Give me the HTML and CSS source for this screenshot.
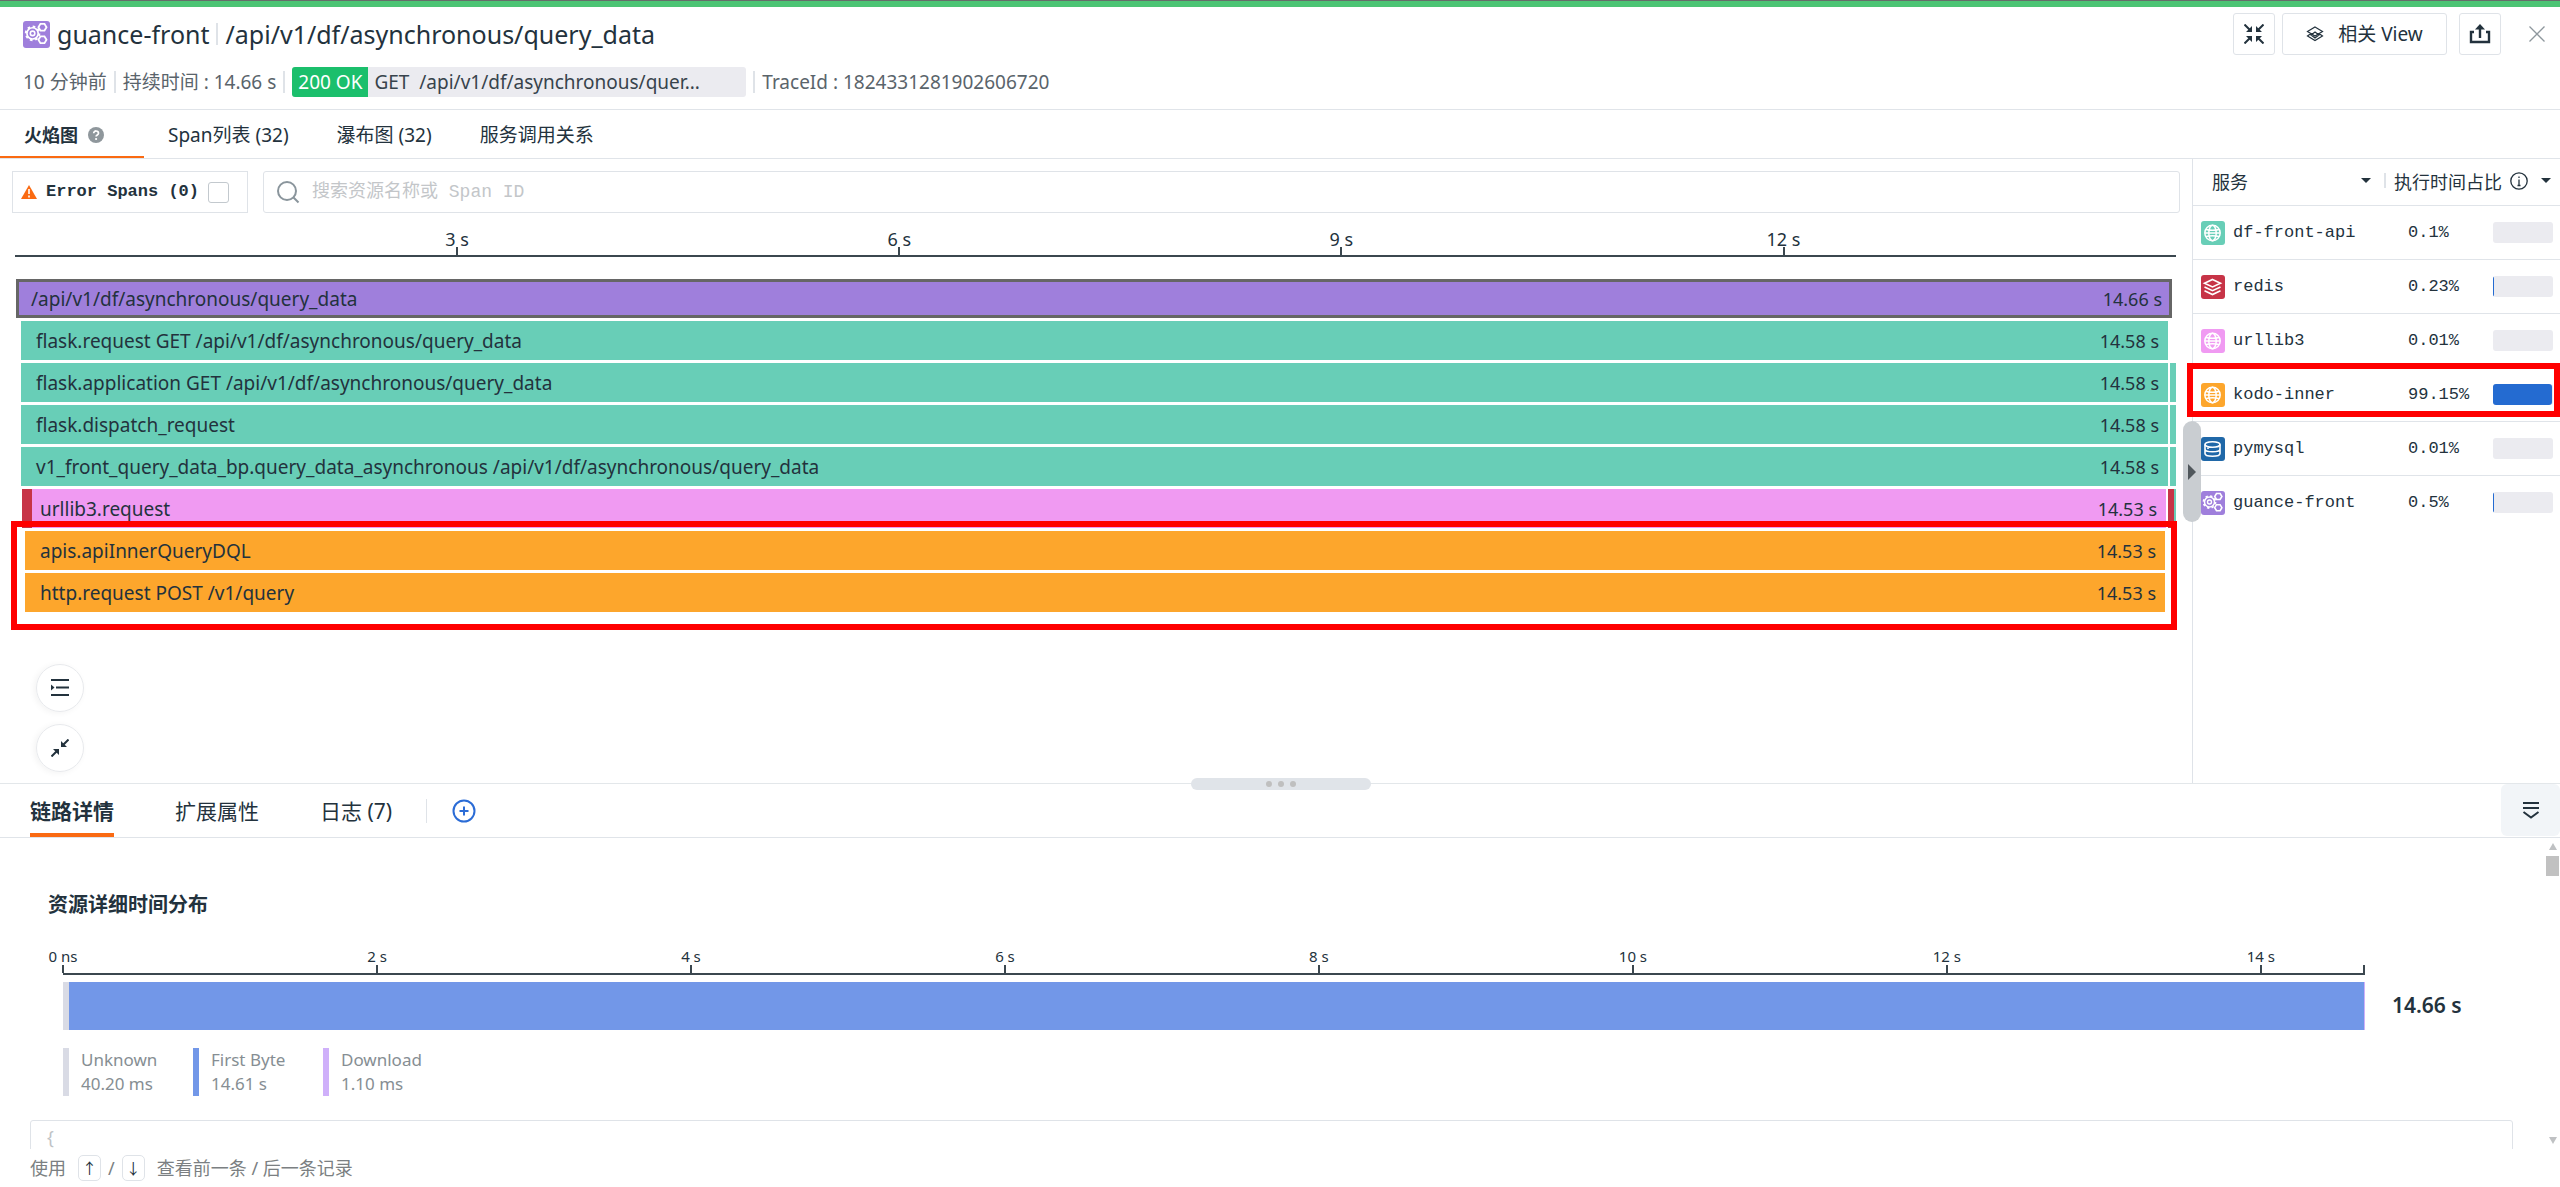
FILE: index.html
```html
<!DOCTYPE html>
<html lang="zh-CN">
<head>
<meta charset="utf-8">
<title>guance-front</title>
<link rel="stylesheet" href="styles.css">
</head>
<body>
<svg class="sprite" aria-hidden="true">
  <symbol id="i-gears" viewBox="0 0 24 24" fill="none" stroke="#fff">
    <circle cx="8.500" cy="11" r="5" stroke-width="1.500"/>
    <circle cx="8.500" cy="11" r="2" stroke-width="1.400"/>
    <circle cx="8.500" cy="11" r="6" stroke-width="1.800" stroke-dasharray="2.300 2.400"/>
    <path d="M15.500 2.500h3.600l1.800 3-1.800 3h-3.600l-1.800-3zM15.500 13.700h3.600l1.800 3-1.800 3h-3.600l-1.800-3z" stroke-width="1.600"/>
  </symbol>
  <symbol id="i-globe" viewBox="0 0 24 24" fill="none" stroke="#fff" stroke-width="1.500">
    <circle cx="11.500" cy="12" r="7.700"/>
    <ellipse cx="11.500" cy="12" rx="3.700" ry="7.700"/>
    <path d="M4 12h15M5 8.500c4 1 9 1 13 0M5 15.500c4-1 9-1 13 0"/>
  </symbol>
  <symbol id="i-layers" viewBox="0 0 24 24" fill="none" stroke="#fff" stroke-width="1.600">
    <path d="M11.500 4.500l8 3.700-8 3.700-8-3.700zM3.500 12l8 3.700 8-3.700M3.500 15.700l8 3.800 8-3.800"/>
  </symbol>
  <symbol id="i-db" viewBox="0 0 24 24" fill="none" stroke="#fff" stroke-width="1.600">
    <ellipse cx="11.500" cy="7.500" rx="7.500" ry="2.800"/>
    <path d="M4 7.500v9c0 3.700 15 3.700 15 0v-9M4 12c0 2.500 3 2.800 7.500 2.800s7.500-.3 7.500-2.800M7 10.500v1.500"/>
  </symbol>
</svg>

<header class="header">
  <div class="header-main">
    <h1 class="title">
      <svg class="title-icon tile-purple"><use href="#i-gears"/></svg>
      <span>guance-front</span><i class="sep"></i><span>/api/v1/df/asynchronous/query_data</span>
    </h1>
    <div class="meta">
      <span>10 分钟前</span><i class="sep"></i>
      <span>持续时间 : 14.66 s</span><i class="sep"></i>
      <span class="status"><b class="status-code">200 OK</b><span class="status-res">GET&nbsp; /api/v1/df/asynchronous/quer...</span></span><i class="sep"></i>
      <span>TraceId : 1824331281902606720</span>
    </div>
  </div>
  <div class="actions">
    <button class="btn btn-square" aria-label="收起">
      <svg width="20" height="20" fill="none" stroke="#23323d" stroke-width="2"><path d="M.500 .500l6 6M19.500 .500l-6 6M.500 19.500l6-6M19.500 19.500l-6-6"/><path fill="#23323d" stroke="none" d="M8 2v6H2zM12 2v6h6zM8 18v-6H2zM12 18v-6h6z"/></svg>
    </button>
    <button class="btn btn-view">
      <svg width="18" height="18" fill="none" stroke="#23323d" stroke-width="1.200"><path d="M9 2l7.500 4.500L9 11 1.500 6.500zM5 8.500L1.500 11 9 15.500l7.500-4.500L13 8.500M9 7l4 3-4 3-4-3z"/></svg>
      <span>相关 View</span>
    </button>
    <button class="btn btn-square btn-share" aria-label="分享">
      <svg width="22" height="20" fill="none" stroke="#23323d" stroke-width="2.400"><path d="M5 8H2v10h18V8h-3M11 14V4"/><path fill="#23323d" stroke="none" d="M11 0l5 5.500H6z"/></svg>
    </button>
    <button class="btn-close" aria-label="关闭">
      <svg width="16" height="16" stroke="#8e979d" stroke-width="1.300"><path d="M.500 .500l15 15M15.500 .500l-15 15"/></svg>
    </button>
  </div>
</header>

<nav class="tabs">
  <button class="tab tab-active">火焰图
    <svg width="16" height="16"><circle cx="8" cy="8" r="8" fill="#8f979c"/><path d="M5.700 6.300c0-3.200 4.800-3 4.800 0 0 1.700-2.400 1.700-2.400 3.300" fill="none" stroke="#fff" stroke-width="1.700"/><circle cx="8.100" cy="12" r="1.100" fill="#fff"/></svg>
  </button>
  <button class="tab">Span列表 (32)</button>
  <button class="tab">瀑布图 (32)</button>
  <button class="tab">服务调用关系</button>
</nav>

<main class="trace">
  <section class="flame">
    <div class="filters">
      <label class="error-filter">
        <svg width="16" height="14"><path d="M8 0l8 14H0z" fill="#fa6a12"/><path d="M8 4v5M8 10.500v2" stroke="#fff" stroke-width="1.600"/></svg>
        <span>Error Spans (0)</span>
        <input type="checkbox" class="check">
      </label>
      <label class="search">
        <svg width="24" height="24" fill="none" stroke="#8a959c" stroke-width="2"><circle cx="11" cy="11" r="9"/><path d="M17.500 17.500l5 5"/></svg>
        <input type="text" class="search-input" placeholder="搜索资源名称或 Span ID" aria-label="搜索">
      </label>
    </div>

    <div class="axis">
      <span class="axis-start"></span>
      <span class="tick">3 s</span><span class="tick">6 s</span><span class="tick">9 s</span><span class="tick">12 s</span>
    </div>

    <div class="bars">
      <div class="row row-root"><div class="bar purple"><span>/api/v1/df/asynchronous/query_data</span><span class="time">14.66 s</span></div></div>
      <div class="row row-flask"><div class="bar green"><span>flask.request GET /api/v1/df/asynchronous/query_data</span><span class="time">14.58 s</span></div></div>
      <div class="row row-flask"><div class="bar green"><span>flask.application GET /api/v1/df/asynchronous/query_data</span><span class="time">14.58 s</span></div><i class="stub green"></i></div>
      <div class="row row-flask"><div class="bar green"><span>flask.dispatch_request</span><span class="time">14.58 s</span></div><i class="stub green"></i></div>
      <div class="row row-flask"><div class="bar green"><span>v1_front_query_data_bp.query_data_asynchronous /api/v1/df/asynchronous/query_data</span><span class="time">14.58 s</span></div><i class="stub green"></i></div>
      <div class="row row-url"><i class="lead crimson"></i><div class="bar pink"><span>urllib3.request</span><span class="time">14.53 s</span></div><i class="tail crimson"></i></div>
      <div class="hot">
        <div class="row row-kodo"><div class="bar orange"><span>apis.apiInnerQueryDQL</span><span class="time">14.53 s</span></div></div>
        <div class="row row-kodo"><div class="bar orange"><span>http.request POST /v1/query</span><span class="time">14.53 s</span></div></div>
      </div>
    </div>

    <div class="tools">
      <button class="round" aria-label="缩进"><svg width="18" height="18" stroke="#23323d" stroke-width="2"><path d="M0 1h18M5 8.500h13M0 16h18"/><path d="M0 5.500l3.500 3-3.500 3z" fill="#23323d" stroke="none"/></svg></button>
      <button class="round" aria-label="折叠"><svg width="18" height="18" stroke="#23323d" stroke-width="2"><path d="M.500 17.500l6-6M17.500 .500l-6 6" fill="none"/><path d="M8 16v-6H2zM10 2v6h6z" fill="#23323d" stroke="none"/></svg></button>
    </div>
  </section>

  <aside class="services">
    <button class="side-handle" aria-label="收起侧栏"><i class="tri-right"></i></button>
    <table class="svc">
      <colgroup><col class="c-name"><col class="c-pct"><col></colgroup>
      <thead>
        <tr>
          <th><div class="th th-name">服务<i class="caret"></i></div></th>
          <th colspan="2"><div class="th th-time"><i class="sep-th"></i><span>执行时间占比</span><svg width="18" height="18" fill="none" stroke="#23323d" stroke-width="1.300"><circle cx="9" cy="9" r="8.200"/><path d="M9 7.500v6M9 4.500v1.600M7.500 13.500h3"/></svg><i class="caret"></i></div></th>
        </tr>
      </thead>
      <tbody>
        <tr><td><div class="name"><svg class="tile tile-green"><use href="#i-globe"/></svg>df-front-api</div></td><td>0.1%</td><td><div class="meter"></div></td></tr>
        <tr><td><div class="name"><svg class="tile tile-red"><use href="#i-layers"/></svg>redis</div></td><td>0.23%</td><td><div class="meter"><i class="fill" style="width:1px"></i></div></td></tr>
        <tr><td><div class="name"><svg class="tile tile-pink"><use href="#i-globe"/></svg>urllib3</div></td><td>0.01%</td><td><div class="meter"></div></td></tr>
        <tr><td><div class="name"><svg class="tile tile-orange"><use href="#i-globe"/></svg>kodo-inner</div></td><td>99.15%</td><td><div class="meter"><i class="fill" style="width:99.15%"></i></div></td></tr>
        <tr><td><div class="name"><svg class="tile tile-blue"><use href="#i-db"/></svg>pymysql</div></td><td>0.01%</td><td><div class="meter"></div></td></tr>
        <tr><td><div class="name"><svg class="tile tile-purple"><use href="#i-gears"/></svg>guance-front</div></td><td>0.5%</td><td><div class="meter"><i class="fill" style="width:1px"></i></div></td></tr>
      </tbody>
    </table>
    <div class="hot-mark"></div>
  </aside>
</main>

<section class="detail">
  <div class="drag"><i></i><i></i><i></i></div>
  <nav class="subtabs">
    <button class="subtab subtab-active">链路详情</button>
    <button class="subtab">扩展属性</button>
    <button class="subtab">日志 (7)</button>
    <i class="subsep"></i>
    <button class="add" aria-label="添加"><svg width="24" height="24" fill="none" stroke="#2b6cd6" stroke-width="2"><circle cx="12" cy="12" r="10.500"/><path d="M12 7.500v9M7.500 12h9"/></svg></button>
    <button class="fold" aria-label="收起"><svg width="18" height="18" fill="none" stroke="#23323d" stroke-width="2"><path d="M1 2h16M1 7h16M1.500 11L9 16.500 16.500 11"/></svg></button>
  </nav>
  <div class="body">
    <div class="content">
      <h2 class="heading">资源详细时间分布</h2>
      <div class="timing">
        <div class="timing-chart">
          <div class="axis2">
            <span class="tick2">0 ns</span><span class="tick2">2 s</span><span class="tick2">4 s</span><span class="tick2">6 s</span><span class="tick2">8 s</span><span class="tick2">10 s</span><span class="tick2">12 s</span><span class="tick2">14 s</span>
          </div>
          <div class="timebar"><i class="seg-unknown"></i><i class="seg-first"></i><i class="seg-down"></i></div>
        </div>
        <strong class="total">14.66 s</strong>
      </div>
      <div class="legend">
        <div class="item item-unknown">Unknown<br>40.20 ms</div>
        <div class="item item-first">First Byte<br>14.61 s</div>
        <div class="item item-down">Download<br>1.10 ms</div>
      </div>
      <pre class="json">{</pre>
    </div>
    <div class="scroll"><i class="up"></i><i class="thumb"></i><i class="down"></i></div>
  </div>
  <footer class="footer"><span>使用</span><kbd>↑</kbd><span>/</span><kbd>↓</kbd><span class="hint">查看前一条 / 后一条记录</span></footer>
</section>
</body>
</html>
```
FILE: styles.css
```css
* { box-sizing: border-box; }
body {
  margin: 0;
  height: 100vh;
  display: flex;
  flex-direction: column;
  overflow: hidden;
  border-top: 1px solid #666c6a;
  background: #fff;
  color: #23323d;
  font: 18px/24px "Noto Sans", "Noto Sans CJK SC", sans-serif;
}
button, input { font: inherit; color: inherit; }
button { background: none; border: 0; padding: 0; cursor: pointer; }
svg { flex: none; display: block; }
.sprite { position: absolute; width: 0; height: 0; }

/* Header */
.header {
  border-top: 6px solid #4cc474;
  border-bottom: 1px solid #e0e4e9;
  display: flex;
  justify-content: space-between;
  padding: 6px 15px 12px 23px;
}
.header-main { display: flex; flex-direction: column; gap: 12px; }
.title {
  margin: 0;
  display: flex;
  align-items: center;
  height: 42px;
  font-size: 25px;
  font-weight: 400;
}
.title-icon { width: 27px; height: 27px; margin-right: 7px; border-radius: 3px; }
.sep { width: 2px; height: 22px; background: #dfe3e8; margin: 0 7px; }
.meta { display: flex; align-items: center; height: 30px; font-size: 19px; color: #5a646b; }
.status { display: flex; line-height: 30px; border-radius: 3px; overflow: hidden; background: #ebebf0; color: #37434c; width: 454px; white-space: nowrap; }
.status-code { background: #1bbf6c; color: #fff; font-weight: 400; padding: 0 6px; }
.status-res { padding-left: 6px; }
.actions { display: flex; align-items: flex-start; }
.btn {
  height: 42px;
  border: 1px solid #dfe3e8;
  border-radius: 3px;
  display: flex;
  align-items: center;
  justify-content: center;
  background: #fff;
}
.btn-square { width: 42px; }
.btn-view { width: 165px; margin: 0 12px 0 7px; gap: 14px; font-size: 19px; }
.btn-close { height: 42px; margin-left: 28px; display: flex; align-items: center; }

/* Tabs */
.tabs { display: flex; height: 49px; border-bottom: 1px solid #e0e4e9; font-size: 19px; }
.tab { padding: 2px 24px 0; display: flex; align-items: center; gap: 10px; }
.tab-active { width: 144px; font-size: 18px; font-weight: 700; border-bottom: 2px solid #fa6a12; padding-top: 4px; }

/* Trace */
.trace { display: flex; border-bottom: 1px solid #e3e7ea; }
.flame { flex: 1; min-width: 0; padding: 12px 12px 11px; }
.filters { display: flex; gap: 15px; }
.error-filter {
  width: 236px;
  height: 42px;
  border: 1px solid #dfe3e8;
  display: flex;
  align-items: center;
  padding-left: 8px;
  gap: 9px;
  font: 700 17px/24px "Liberation Mono", monospace;
  white-space: nowrap;
}
.check {
  appearance: none;
  width: 21px;
  height: 21px;
  margin: 0;
  border: 1px solid #c3c9ce;
  border-radius: 3px;
}
.search {
  flex: 1;
  height: 42px;
  border: 1px solid #dfe3e8;
  border-radius: 3px;
  display: flex;
  align-items: center;
  padding-left: 12px;
  gap: 12px;
}
.search-input {
  flex: 1;
  border: 0;
  outline: 0;
  padding: 0;
  background: none;
  font: 18px/24px "Liberation Mono", "Noto Sans CJK SC", monospace;
}
.search-input::placeholder { color: #c3c6c9; opacity: 1; }

.axis { display: flex; margin: 14px 4px 0 3px; border-bottom: 2px solid #3b474f; font-size: 18px; }
.axis-start { flex: 0 0 10.23%; }
.tick {
  flex: 0 0 20.46%;
  text-align: center;
  display: flex;
  flex-direction: column;
  align-items: center;
}
.tick::after { content: ""; width: 2px; height: 8px; margin-top: -4px; background: #3b474f; }

.bars { padding: 22px 4px 0; display: flex; flex-direction: column; gap: 3px; margin-bottom: 52px; font-size: 19px; }
.row { display: flex; height: 39px; }
.bar { flex: 1; display: flex; align-items: center; justify-content: space-between; padding: 0 9px 0 15px; }
.time { font-size: 18px; }
.row-root { padding-right: 4px; }
.row-root .bar { border: 3px solid #666; padding: 0 7px 0 12px; }
.row-flask { padding-left: 5px; }
.row-flask .bar { margin-right: 8px; }
.stub { width: 6px; margin-left: -6px; }
.row-url { padding-left: 6px; }
.lead { width: 10px; }
.row-url .bar { padding-left: 8px; }
.tail { width: 8px; margin-left: 2px; border-right: 2px solid #68ceb7; }
.row-kodo { padding: 0 11px 0 9px; }
.hot { position: relative; display: flex; flex-direction: column; gap: 3px; }
.hot::after { content: ""; position: absolute; inset: -10px -1px -18px -5px; border: 6px solid #f00; }
.purple { background: #9f7fdc; }
.green { background: #68ceb7; }
.pink { background: #f09af2; }
.crimson { background: #c73447; }
.orange { background: #fda62c; }

.tools { display: flex; flex-direction: column; gap: 12px; padding-left: 24px; }
.round {
  width: 48px;
  height: 48px;
  border: 1px solid #e8eaed;
  border-radius: 50%;
  display: grid;
  place-items: center;
  box-shadow: -2px 1px 6px #0000000d;
}

/* Services */
.services { position: relative; width: 368px; border-left: 1px solid #dfe3e8; }
.svc { width: 100%; table-layout: fixed; border-collapse: collapse; font: 17px/24px "Liberation Mono", monospace; }
.c-name { width: 215px; }
.c-pct { width: 85px; }
.svc th, .svc td { padding: 0; text-align: left; font-weight: 400; }
.svc td { padding-top: 1px; }
.svc tr { height: 54px; border-bottom: 1px solid #e0e4e9; }
.svc thead tr { height: 46px; }
.svc tbody tr:last-child { border: 0; }
.th { display: flex; align-items: center; padding-bottom: 2px; font: 18px/24px "Noto Sans CJK SC", sans-serif; }
.th-name { padding-left: 19px; width: 178px; justify-content: space-between; }
.th-time { margin-left: -24px; gap: 8px; white-space: nowrap; }
.th-time .caret { margin-left: 5px; }
.sep-th { width: 2px; height: 15px; background: #dfe3e8; }
.caret { border: 5px solid transparent; border-top-color: #23323d; border-bottom: 0; }
.name { display: flex; align-items: center; gap: 8px; padding-left: 8px; }
.tile { width: 24px; height: 24px; border-radius: 3px; }
.tile-green { background: #68ceb7; }
.tile-red { background: #c73447; }
.tile-pink { background: #f09af2; }
.tile-orange { background: #fda62c; }
.tile-blue { background: #2068a8; }
.tile-purple { background: #9f7fdc; }
.meter { width: 60px; height: 21px; border-radius: 3px; background: #ebebf0; overflow: hidden; }
.fill { display: block; height: 100%; background: #246bd1; border-radius: 0 3px 3px 0; }
.side-handle {
  position: absolute;
  z-index: 1;
  left: -10px;
  top: 262px;
  width: 18px;
  height: 101px;
  border-radius: 9px;
  background: #c9cdd1;
  display: grid;
  place-items: center;
}
.tri-right { border: 8px solid transparent; border-left-color: #50575c; border-right: 0; }
.hot-mark { position: absolute; left: -6px; right: 0; top: 204px; height: 54px; border: 6px solid #f00; }

/* Detail */
.detail { position: relative; flex: 1; min-height: 0; display: flex; flex-direction: column; }
.drag {
  position: absolute;
  top: -6px;
  left: calc(50% - 89px);
  width: 180px;
  height: 12px;
  border-radius: 6px;
  background: #e0e4e9;
  display: flex;
  align-items: center;
  justify-content: center;
  gap: 6px;
}
.drag i { width: 6px; height: 6px; border-radius: 50%; background: #bfbfbf; }
.subtabs { display: flex; align-items: center; height: 54px; padding-left: 30px; gap: 61px; border-bottom: 1px solid #e0e4e9; font-size: 21px; }
.subtab { height: 53px; }
.subtab-active { font-weight: 700; border-bottom: 4px solid #fa6a12; padding-top: 4px; }
.subsep { width: 1px; height: 24px; background: #dfe3e8; margin-left: -27px; }
.add { margin-left: -36px; }
.fold { margin-left: auto; width: 59px; height: 52px; border-radius: 6px; background: #f2f5f8; display: grid; place-items: center; align-self: flex-start; }
.body { flex: 1; min-height: 0; display: flex; overflow: hidden; }
.content { flex: 1; padding: 52px 33px 0 30px; overflow: hidden; }
.heading { margin: 0 0 0 18px; font-size: 20px; line-height: 30px; }
.timing { display: flex; padding: 27px 0 0 33px; }
.timing-chart { flex: 1; }
.axis2 {
  display: flex;
  position: relative;
  border-bottom: 2px solid #3b474f;
  font-size: 15px;
  line-height: 18px;
}
.axis2::after { content: ""; position: absolute; right: 0; bottom: 0; width: 2px; height: 8px; background: #3b474f; }
.tick2 { flex: 0 0 13.64%; display: flex; flex-direction: column; align-items: center; }
.tick2:first-child { margin-left: -6.82%; }
.tick2::after { content: ""; width: 2px; height: 8px; background: #3b474f; }
.timebar { display: flex; height: 48px; margin-top: 7px; }
.seg-unknown { width: 6px; background: #d9dbe5; }
.seg-first { flex: 1; background: #7297e8; }
.seg-down { width: 1px; background: #cfb0fa; }
.total { width: 148px; padding: 46px 0 0 27px; font-size: 21px; font-weight: 600; line-height: 24px; }
.legend { display: flex; padding: 18px 0 0 33px; font-size: 17px; color: #868e93; }
.item { height: 48px; width: 130px; border-left: 6px solid; padding-left: 12px; }
.item-unknown { border-color: #d9dbe5; }
.item-first { border-color: #7297e8; }
.item-down { border-color: #cfb0fa; }
.json { margin: 24px 0 0; height: 200px; border: 1px solid #dfe3e8; border-radius: 3px; padding: 4px 16px; font: inherit; color: #bfc3c6; }
.scroll { width: 14px; padding: 5px 1px 5px 0; display: flex; flex-direction: column; align-items: center; }
.up, .down { border: 4px solid transparent; }
.up { border-top: 0; border-bottom: 7px solid #bfc1c3; }
.down { border-bottom: 0; border-top: 7px solid #bfc1c3; margin-top: auto; }
.thumb { width: 13px; height: 20px; margin-top: 6px; background: #c1c1c1; }
.footer { flex: none; height: 38px; padding: 0 30px; display: flex; align-items: center; color: #7b7f82; gap: 7px; }
kbd { width: 23px; height: 26px; border: 1px solid #dfe3e8; border-radius: 5px; display: grid; place-items: center; font: 15px/18px "Noto Sans CJK SC", sans-serif; color: #23323d; }
.footer span:first-child { margin-right: 5px; }
.hint { margin-left: 5px; }
```
